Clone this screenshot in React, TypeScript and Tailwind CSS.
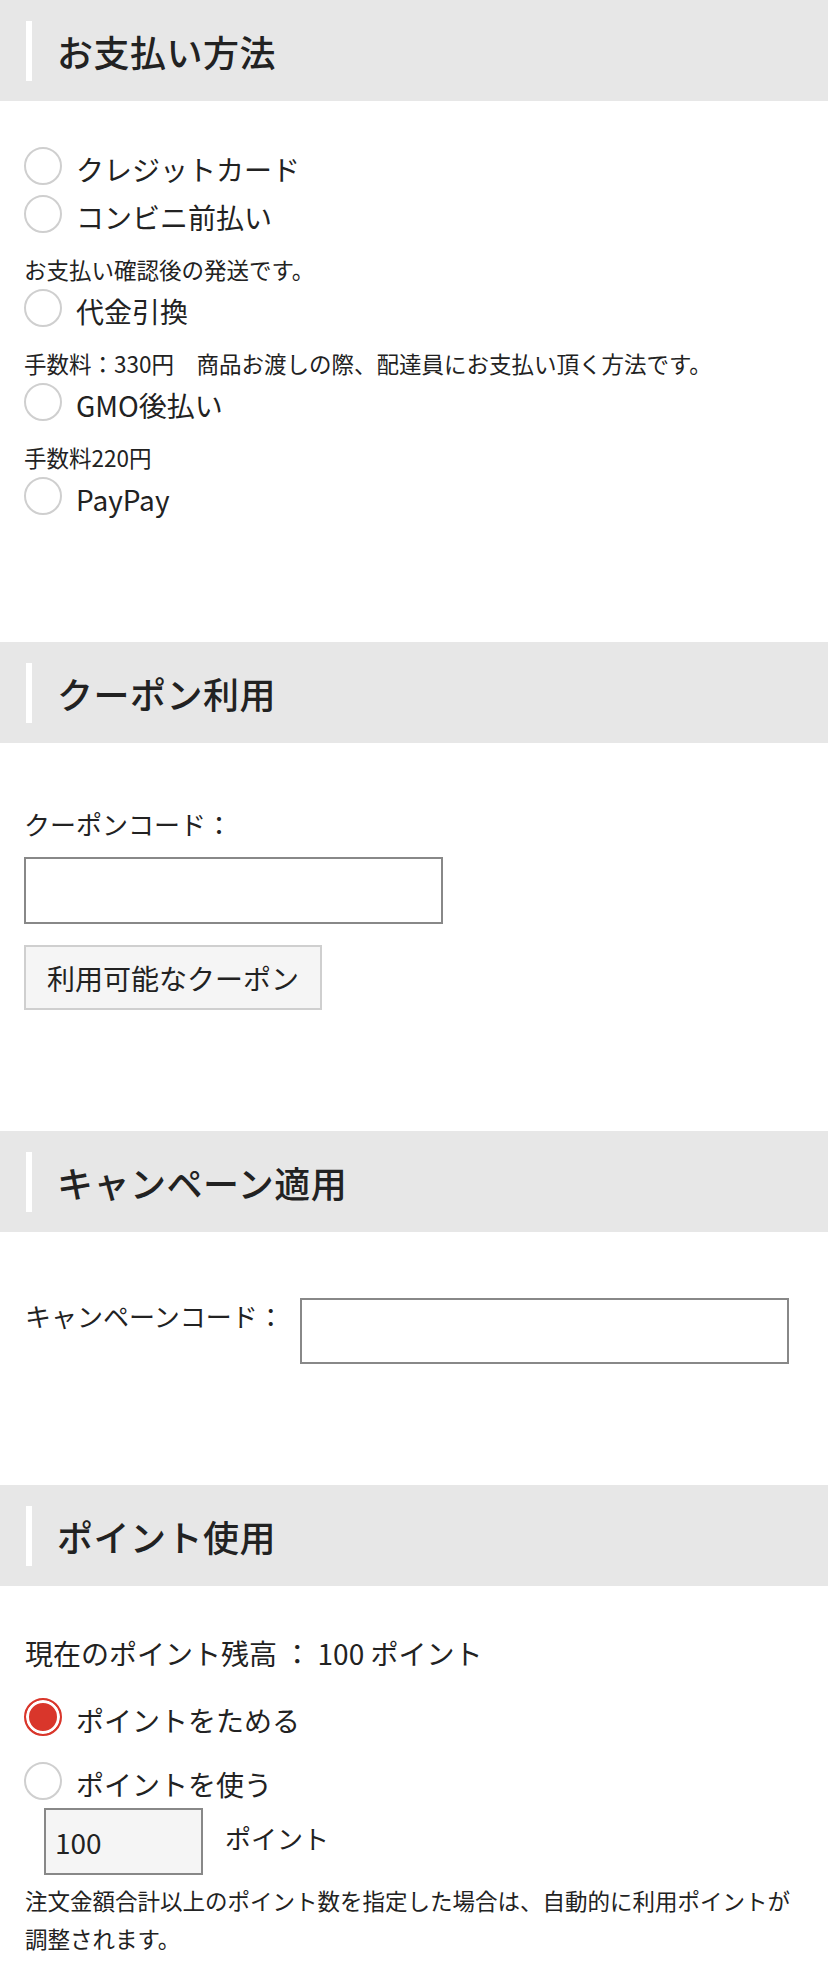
import type { ReactNode } from "react"

const radioClass =
  "m-0 h-[38px] w-[38px] shrink-0 appearance-none rounded-full border-2 border-[#cfcfcf] bg-white checked:border-[#d9362b] checked:bg-[#d9362b] checked:shadow-[inset_0_0_0_3px_#fff]"

function SectionHeader({ title }: { title: string }) {
  return (
    <div className="flex h-[101px] items-center bg-[#e7e7e7] pl-[26px]">
      <span className="h-[60px] w-[6px] bg-white" />
      <h2 className="ml-[25px] text-[36px] font-medium leading-none tracking-[0.5px] text-[#222]">{title}</h2>
    </div>
  )
}

function Radio({ name, label, checked }: { name: string; label: string; checked?: boolean }) {
  return (
    <label className="flex h-[48px] items-center">
      <input type="radio" name={name} defaultChecked={checked} className={radioClass} />
      <span className="ml-[14px] mt-[5px] text-[28px] leading-none">{label}</span>
    </label>
  )
}

function Note({ children }: { children: ReactNode }) {
  return <p className="mt-[16px] text-[22.5px] leading-[30px]">{children}</p>
}

const paymentMethods = [
  { label: "クレジットカード" },
  { label: "コンビニ前払い", note: "お支払い確認後の発送です。" },
  { label: "代金引換", note: "手数料：330円　商品お渡しの際、配達員にお支払い頂く方法です。" },
  { label: "GMO後払い", note: "手数料220円" },
  { label: "PayPay" },
]

export default function App() {
  return (
    <div className="min-h-[1980px] w-[828px] bg-white font-['Noto_Sans_CJK_JP','Noto_Sans',sans-serif] text-[#222]">
      <SectionHeader title="お支払い方法" />
      <div className="px-[24px] pt-[41px] pb-[122px]">
        {paymentMethods.map((m) => (
          <div key={m.label}>
            <Radio name="payment" label={m.label} />
            {m.note && <Note>{m.note}</Note>}
          </div>
        ))}
      </div>

      <SectionHeader title="クーポン利用" />
      <div className="px-[24px] pt-[63px] pb-[121px]">
        <p className="text-[26px] leading-[36px]">クーポンコード：</p>
        <input type="text" className="mt-[15px] block h-[67px] w-[419px] border-2 border-[#888] bg-white px-3 text-[26px]" />
        <button className="mt-[21px] h-[65px] w-[298px] border-2 border-[#cfcfcf] bg-[#f5f5f5] text-[28px]">
          利用可能なクーポン
        </button>
      </div>

      <SectionHeader title="キャンペーン適用" />
      <div className="flex items-start px-[25px] pt-[66px] pb-[121px]">
        <span className="text-[26px] leading-[36px]">キャンペーンコード：</span>
        <input type="text" className="ml-[16px] h-[66px] w-[489px] border-2 border-[#888] bg-white px-3 text-[26px]" />
      </div>

      <SectionHeader title="ポイント使用" />
      <div className="pl-[24px] pr-[12px] pt-[49px] pb-[20px]">
        <p className="pl-px text-[28px] leading-[36px]">現在のポイント残高 ： 100 ポイント</p>
        <div className="mt-[22px] flex flex-col gap-[16px]">
          <Radio name="point" label="ポイントをためる" checked />
          <Radio name="point" label="ポイントを使う" />
        </div>
        <div className="mt-[3px] flex items-center pl-[20px]">
          <input
            type="text"
            defaultValue="100"
            className="h-[67px] w-[159px] border-2 border-[#888] bg-[#f5f5f5] px-[9px] text-[28px]"
          />
          <span className="ml-[22px] -mt-[8px] text-[26px]">ポイント</span>
        </div>
        <p className="mt-[6px] pl-px text-[22.5px] leading-[38px]">
          <span className="whitespace-nowrap">注文金額合計以上のポイント数を指定した場合は、自動的に利用ポイントが</span>
          <br />
          調整されます。
        </p>
      </div>
    </div>
  )
}
